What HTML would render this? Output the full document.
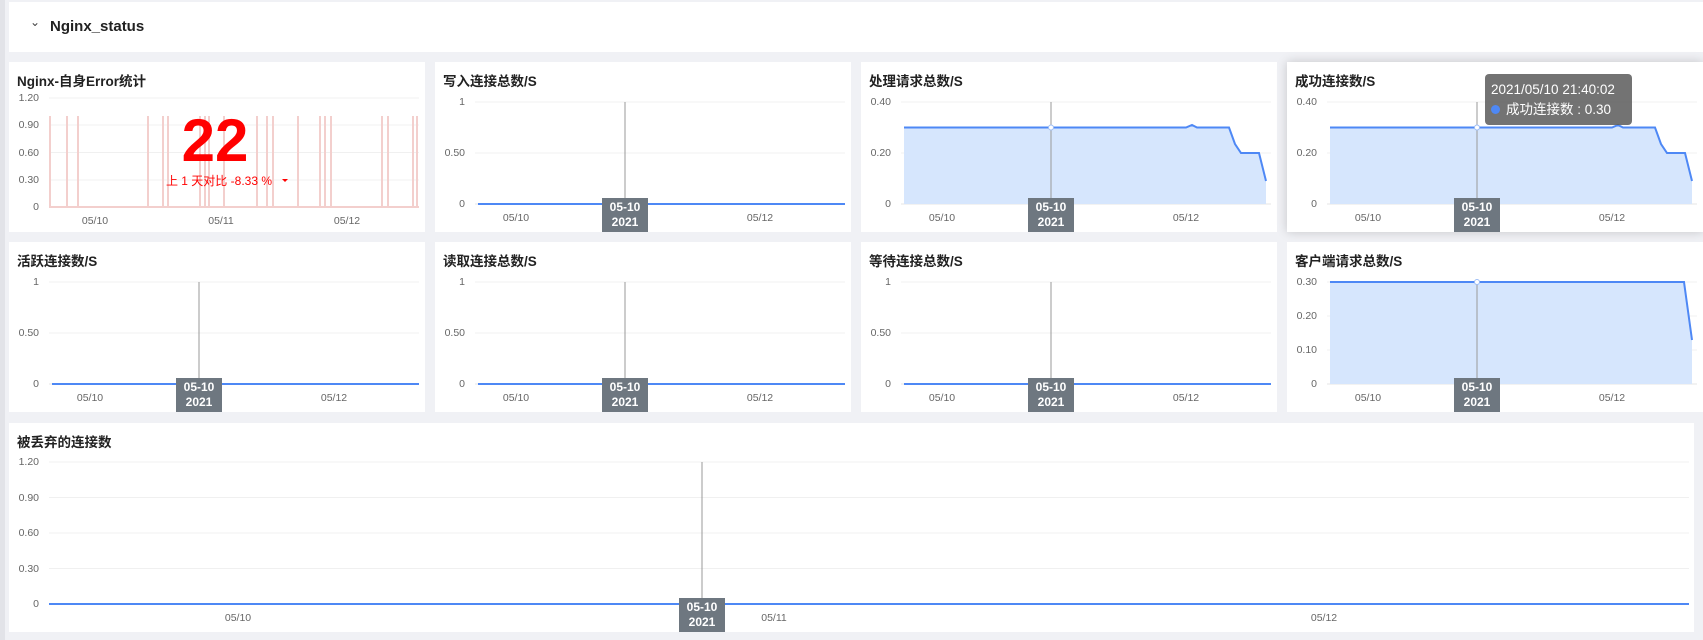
<!DOCTYPE html>
<html><head><meta charset="utf-8"><style>
*{margin:0;padding:0;box-sizing:border-box}
body{width:1703px;height:640px;background:#f0f1f5;font-family:"Liberation Sans","Noto Sans CJK SC",sans-serif;position:relative;overflow:hidden}
.strip{position:absolute;left:0;top:0;width:5px;height:640px;background:#e2e3e8}
.hdr{position:absolute;left:9px;top:2px;width:1694px;height:50px;background:#fff}
.hdr .t{position:absolute;left:41px;top:16px;font-size:15px;font-weight:bold;color:#222}
.hdr .c{position:absolute;left:21px;top:13px;font-size:12px;color:#444}
.p{position:absolute;background:#fff;width:416px;height:170px}
.p .tt{position:absolute;left:8px;top:8px;font-size:13.5px;font-weight:bold;color:#222}
svg{position:absolute;left:0;top:0;overflow:visible}
svg text{font-family:"Liberation Sans",sans-serif;font-size:10.5px;fill:#666}
.tag{position:absolute;width:46px;height:34px;background:#6e7780;color:#fff;font-size:12px;font-weight:bold;text-align:center;line-height:15px;padding-top:2px}
</style></head><body>
<div class="strip"></div>
<div class="hdr"><span class="c">&#8964;</span><span class="t">Nginx_status</span></div>

<!-- panel 1 -->
<div class="p" style="left:9px;top:62px">
<div class="tt">Nginx-自身Error统计</div>
<svg width="416" height="170">
<g stroke="#f0f0f0"><line x1="40" x2="410" y1="36" y2="36"/><line x1="40" x2="410" y1="63" y2="63"/><line x1="40" x2="410" y1="90.5" y2="90.5"/><line x1="40" x2="410" y1="118" y2="118"/></g>
<line x1="40" x2="410" y1="145" y2="145" stroke="#e6e6e6"/>
<g text-anchor="end"><text x="30" y="39">1.20</text><text x="30" y="66">0.90</text><text x="30" y="94">0.60</text><text x="30" y="121">0.30</text><text x="30" y="148">0</text></g>
<g text-anchor="middle"><text x="86" y="162">05/10</text><text x="212" y="162">05/11</text><text x="338" y="162">05/12</text></g>
<g stroke="#f3cfcd" stroke-width="2" fill="none">
<path d="M41 145V54M58 145V54M69 145V54M139 145V54M154 145V54M159 145V54M191 145V54M196 145V54M200 145V54M215 145V54M248 145V54M258 145V54M264 145V54M289 145V54M311 145V54M316 145V54M322 145V54M373 145V54M379 145V54M404 145V54M408 145V54"/>
<path d="M40 145H410"/></g>
<text x="206" y="99" text-anchor="middle" style="font-size:60px;font-weight:bold;fill:#ff0000">22</text>
<text x="210" y="123" text-anchor="middle" style="font-size:12px;fill:#ff0000;font-family:'Liberation Sans','Noto Sans CJK SC',sans-serif">上 1 天对比  -8.33 %</text>
<path d="M273 117l3 3 3-3z" fill="#ff0000"/>
</svg></div>

<div class="p" style="left:435px;top:62px"><div class="tt">写入连接总数/S</div>
<svg width="416" height="170"><g stroke="#f0f0f0"><line x1="40" x2="410" y1="40" y2="40"/><line x1="40" x2="410" y1="91" y2="91"/></g><line x1="40" x2="410" y1="142" y2="142" stroke="#e6e6e6"/>
<g text-anchor="end"><text x="30" y="43">1</text><text x="30" y="94">0.50</text><text x="30" y="145">0</text></g>
<g text-anchor="middle"><text x="81" y="159">05/10</text><text x="325" y="159">05/12</text></g>
<line x1="190" x2="190" y1="40" y2="142" stroke="#999"/><path d="M43 142H410" stroke="#4e88f5" stroke-width="2"/></svg>
<div class="tag" style="left:167px;top:136px">05-10<br>2021</div></div>

<div class="p" style="left:861px;top:62px"><div class="tt">处理请求总数/S</div>
<svg width="416" height="170"><g stroke="#f0f0f0"><line x1="40" x2="410" y1="40" y2="40"/><line x1="40" x2="410" y1="91" y2="91"/></g><line x1="40" x2="410" y1="142" y2="142" stroke="#e6e6e6"/>
<g text-anchor="end"><text x="30" y="43">0.40</text><text x="30" y="94">0.20</text><text x="30" y="145">0</text></g>
<g text-anchor="middle"><text x="81" y="159">05/10</text><text x="325" y="159">05/12</text></g>
<path d="M43 142V65.5H325L331 63L336 65.5H368L374 82L380 91H398L405 119V142Z" fill="#d6e6fd"/>
<path d="M43 65.5H325L331 63L336 65.5H368L374 82L380 91H398L405 119" fill="none" stroke="#4e88f5" stroke-width="2"/>
<line x1="190" x2="190" y1="40" y2="142" stroke="#999"/><circle cx="190" cy="65.5" r="2.5" fill="#fff" stroke="#9bbcf5"/></svg>
<div class="tag" style="left:167px;top:136px">05-10<br>2021</div></div>

<div class="p" style="left:1287px;top:62px;box-shadow:0 0 10px rgba(0,0,0,0.18)"><div class="tt">成功连接数/S</div>
<svg width="416" height="170"><g stroke="#f0f0f0"><line x1="40" x2="410" y1="40" y2="40"/><line x1="40" x2="410" y1="91" y2="91"/></g><line x1="40" x2="410" y1="142" y2="142" stroke="#e6e6e6"/>
<g text-anchor="end"><text x="30" y="43">0.40</text><text x="30" y="94">0.20</text><text x="30" y="145">0</text></g>
<g text-anchor="middle"><text x="81" y="159">05/10</text><text x="325" y="159">05/12</text></g>
<path d="M43 142V65.5H325L331 63L336 65.5H368L374 82L380 91H398L405 119V142Z" fill="#d6e6fd"/>
<path d="M43 65.5H325L331 63L336 65.5H368L374 82L380 91H398L405 119" fill="none" stroke="#4e88f5" stroke-width="2"/>
<line x1="190" x2="190" y1="40" y2="142" stroke="#999"/><circle cx="190" cy="65.5" r="2.5" fill="#fff" stroke="#9bbcf5"/></svg>
<div class="tag" style="left:167px;top:136px">05-10<br>2021</div>
<div style="position:absolute;left:198px;top:12px;width:147px;height:51px;background:rgba(90,90,90,0.85);border-radius:4px;color:#fff;font-size:13.5px;padding:6px 0 0 6px;line-height:20px;font-family:'Liberation Sans','Noto Sans CJK SC',sans-serif">2021/05/10 21:40:02<br><span style="display:inline-block;width:9px;height:9px;border-radius:50%;background:#4e88f5;margin-right:6px"></span>成功连接数 : 0.30</div>
</div>

<div class="p" style="left:9px;top:242px"><div class="tt">活跃连接数/S</div>
<svg width="416" height="170"><g stroke="#f0f0f0"><line x1="40" x2="410" y1="40" y2="40"/><line x1="40" x2="410" y1="91" y2="91"/></g><line x1="40" x2="410" y1="142" y2="142" stroke="#e6e6e6"/>
<g text-anchor="end"><text x="30" y="43">1</text><text x="30" y="94">0.50</text><text x="30" y="145">0</text></g>
<g text-anchor="middle"><text x="81" y="159">05/10</text><text x="325" y="159">05/12</text></g>
<line x1="190" x2="190" y1="40" y2="142" stroke="#999"/><path d="M43 142H410" stroke="#4e88f5" stroke-width="2"/></svg>
<div class="tag" style="left:167px;top:136px">05-10<br>2021</div></div>

<div class="p" style="left:435px;top:242px"><div class="tt">读取连接总数/S</div>
<svg width="416" height="170"><g stroke="#f0f0f0"><line x1="40" x2="410" y1="40" y2="40"/><line x1="40" x2="410" y1="91" y2="91"/></g><line x1="40" x2="410" y1="142" y2="142" stroke="#e6e6e6"/>
<g text-anchor="end"><text x="30" y="43">1</text><text x="30" y="94">0.50</text><text x="30" y="145">0</text></g>
<g text-anchor="middle"><text x="81" y="159">05/10</text><text x="325" y="159">05/12</text></g>
<line x1="190" x2="190" y1="40" y2="142" stroke="#999"/><path d="M43 142H410" stroke="#4e88f5" stroke-width="2"/></svg>
<div class="tag" style="left:167px;top:136px">05-10<br>2021</div></div>

<div class="p" style="left:861px;top:242px"><div class="tt">等待连接总数/S</div>
<svg width="416" height="170"><g stroke="#f0f0f0"><line x1="40" x2="410" y1="40" y2="40"/><line x1="40" x2="410" y1="91" y2="91"/></g><line x1="40" x2="410" y1="142" y2="142" stroke="#e6e6e6"/>
<g text-anchor="end"><text x="30" y="43">1</text><text x="30" y="94">0.50</text><text x="30" y="145">0</text></g>
<g text-anchor="middle"><text x="81" y="159">05/10</text><text x="325" y="159">05/12</text></g>
<line x1="190" x2="190" y1="40" y2="142" stroke="#999"/><path d="M43 142H410" stroke="#4e88f5" stroke-width="2"/></svg>
<div class="tag" style="left:167px;top:136px">05-10<br>2021</div></div>

<div class="p" style="left:1287px;top:242px"><div class="tt">客户端请求总数/S</div>
<svg width="416" height="170"><g stroke="#f0f0f0"><line x1="40" x2="410" y1="40" y2="40"/><line x1="40" x2="410" y1="74" y2="74"/><line x1="40" x2="410" y1="108" y2="108"/></g><line x1="40" x2="410" y1="142" y2="142" stroke="#e6e6e6"/>
<g text-anchor="end"><text x="30" y="43">0.30</text><text x="30" y="77">0.20</text><text x="30" y="111">0.10</text><text x="30" y="145">0</text></g>
<g text-anchor="middle"><text x="81" y="159">05/10</text><text x="325" y="159">05/12</text></g>
<path d="M43 142V40H397L405 98V142Z" fill="#d6e6fd"/>
<path d="M43 40H397L405 98" fill="none" stroke="#4e88f5" stroke-width="2"/>
<line x1="190" x2="190" y1="40" y2="142" stroke="#999"/><circle cx="190" cy="40" r="2.5" fill="#fff" stroke="#9bbcf5"/></svg>
<div class="tag" style="left:167px;top:136px">05-10<br>2021</div></div>

<div class="p" style="left:9px;top:423px;width:1685px;height:209px"><div class="tt">被丢弃的连接数</div>
<svg width="1685" height="209"><g stroke="#f0f0f0"><line x1="40" x2="1680" y1="39" y2="39"/><line x1="40" x2="1680" y1="74.5" y2="74.5"/><line x1="40" x2="1680" y1="110" y2="110"/><line x1="40" x2="1680" y1="145.5" y2="145.5"/></g><line x1="40" x2="1680" y1="181" y2="181" stroke="#e6e6e6"/>
<g text-anchor="end"><text x="30" y="42">1.20</text><text x="30" y="78">0.90</text><text x="30" y="113">0.60</text><text x="30" y="149">0.30</text><text x="30" y="184">0</text></g>
<g text-anchor="middle"><text x="229" y="198">05/10</text><text x="765" y="198">05/11</text><text x="1315" y="198">05/12</text></g>
<line x1="693" x2="693" y1="39" y2="181" stroke="#999"/><path d="M40 181H1680" stroke="#4e88f5" stroke-width="2"/></svg>
<div class="tag" style="left:670px;top:175px">05-10<br>2021</div></div>
</body></html>
